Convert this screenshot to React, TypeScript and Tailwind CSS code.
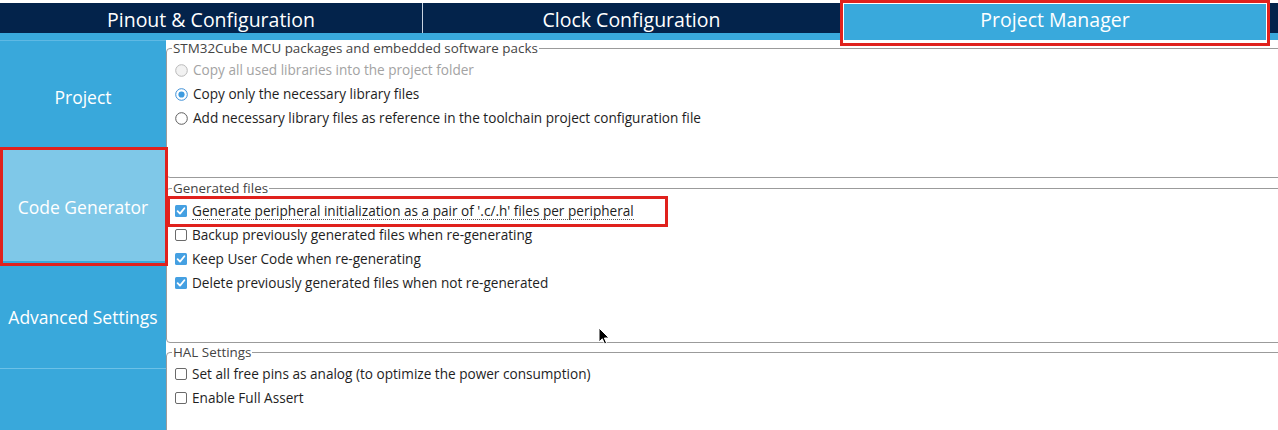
import React from "react";

const FONT = { fontFamily: '"Open Sans", "DejaVu Sans", sans-serif' };

function Radio({ state }: { state: "disabled" | "on" | "off" }) {
  if (state === "disabled")
    return (
      <svg width="13" height="13" viewBox="0 0 13 13" className="shrink-0">
        <circle cx="6.5" cy="6.5" r="5.8" fill="#f2f2f2" stroke="#b9b9b9" strokeWidth="1" />
      </svg>
    );
  if (state === "on")
    return (
      <svg width="13" height="13" viewBox="0 0 13 13" className="shrink-0">
        <circle cx="6.5" cy="6.5" r="5.8" fill="#ffffff" stroke="#3d8fd6" strokeWidth="1" />
        <circle cx="6.5" cy="6.5" r="3.1" fill="#3d9be0" />
      </svg>
    );
  return (
    <svg width="13" height="13" viewBox="0 0 13 13" className="shrink-0">
      <circle cx="6.5" cy="6.5" r="5.8" fill="#ffffff" stroke="#5e5e5e" strokeWidth="1" />
    </svg>
  );
}

function Check({ on }: { on: boolean }) {
  if (on)
    return (
      <svg width="12" height="12" viewBox="0 0 12 12" className="shrink-0">
        <rect x="0" y="0" width="12" height="12" rx="1.5" fill="#45a0e2" />
        <path d="M2.6 6.1 L5 8.6 L9.4 3.2" fill="none" stroke="#ffffff" strokeWidth="1.8" strokeLinecap="round" strokeLinejoin="round" />
      </svg>
    );
  return (
    <svg width="12" height="12" viewBox="0 0 12 12" className="shrink-0">
      <rect x="0.5" y="0.5" width="11" height="11" rx="1.5" fill="#ffffff" stroke="#6a6a6a" strokeWidth="1" />
    </svg>
  );
}

function Row({ children, control, disabled, dotted }: { children: React.ReactNode; control: React.ReactNode; disabled?: boolean; dotted?: boolean }) {
  return (
    <div className="h-[24px] flex items-center pl-[3px] gap-[5px]">
      {control}
      <span
        className={`text-[13.6px] leading-[16px] whitespace-nowrap ${disabled ? "text-[#a3a3a3]" : "text-[#1e1e1e]"} ${dotted ? "border-b border-dotted border-[#555]" : ""}`}
      >
        {children}
      </span>
    </div>
  );
}

function Group({ title, className, children }: { title: string; className: string; children: React.ReactNode }) {
  return (
    <fieldset className={`border border-[#9b9b9b] rounded-[4px] pl-[5px] w-[1125px] min-w-0 shrink-0 ${className}`}>
      <legend className="px-[1px] text-[13.4px] leading-[16px] text-[#444444]">{title}</legend>
      {children}
    </fieldset>
  );
}

export default function App() {
  return (
    <div className="relative w-[1278px] h-[430px] bg-white overflow-hidden" style={FONT}>
      {/* Top tabs */}
      <div className="pt-[3px]">
        <div className="flex h-[30px] bg-[#03234b]">
          <div className="w-[423px] shrink-0 flex items-center justify-center text-white text-[19.5px] pt-[3px] border-r border-[#c9d3e0]">
            Pinout &amp; Configuration
          </div>
          <div className="w-[417px] shrink-0 flex items-center justify-center text-white text-[19.5px] pt-[3px]">Clock Configuration</div>
          <div className="w-[430px] shrink-0 flex items-center justify-center text-white text-[19.5px] pt-[3px] bg-[#39a9dc]">Project Manager</div>
        </div>
        <div className="h-[7px] bg-[#39a9dc]" />
      </div>

      <div className="flex">
        {/* Sidebar */}
        <div className="w-[166px] shrink-0 h-[390px] bg-[#39a8db] flex flex-col border-t border-[#5fb9e4]">
          <div className="h-[108px] flex items-center justify-center text-white text-[17.5px] pt-[4px]">Project</div>
          <div className="h-[1px] bg-[#5fb9e4]" />
          <div className="h-[111px] bg-[#7fc8e8] flex items-center justify-center text-white text-[17.5px] pt-[4px]">Code Generator</div>
          <div className="h-[3px] bg-[#39a8db]" />
          <div className="h-[104px] flex items-center justify-center text-white text-[17.5px] whitespace-nowrap pt-[2px]">Advanced Settings</div>
          <div className="h-[1px] bg-[#6cc1e7]" />
          <div className="flex-1" />
        </div>

        {/* Content */}
        <div className="flex-1 min-w-0 flex flex-col">
          <Group title="STM32Cube MCU packages and embedded software packs" className="h-[138px]">
            <div className="mt-[2px]">
              <Row control={<Radio state="disabled" />} disabled>
                Copy all used libraries into the project folder
              </Row>
              <Row control={<Radio state="on" />}>Copy only the necessary library files</Row>
              <Row control={<Radio state="off" />}>
                Add necessary library files as reference in the toolchain project configuration file
              </Row>
            </div>
          </Group>
          <Group title="Generated files" className="h-[163px] mt-[2px]">
            <div className="mt-[3px]">
              <Row control={<Check on />} dotted>
                Generate peripheral initialization as a pair of '.c/.h' files per peripheral
              </Row>
              <Row control={<Check on={false} />}>Backup previously generated files when re-generating</Row>
              <Row control={<Check on />}>Keep User Code when re-generating</Row>
              <Row control={<Check on />}>Delete previously generated files when not re-generated</Row>
            </div>
          </Group>
          <Group title="HAL Settings" className="h-[120px] mt-[1px]">
            <div className="mt-[2px]">
              <Row control={<Check on={false} />}>Set all free pins as analog (to optimize the power consumption)</Row>
              <Row control={<Check on={false} />}>Enable Full Assert</Row>
            </div>
          </Group>
        </div>
      </div>

      {/* Red highlight annotations */}
      <div className="absolute left-[840px] top-0 w-[430px] h-[46px] border-[3px] border-[#e0211d] shadow-[inset_0_0_0_1px_#ffffff]" />
      <div className="absolute left-0 top-[147px] w-[168px] h-[119px] border-[3px] border-[#e0211d]" />
      <div className="absolute left-[167px] top-[196px] w-[501px] h-[31px] border-[3px] border-[#e0211d]" />

      {/* Mouse cursor */}
      <svg className="absolute left-[598px] top-[327px]" width="12" height="19" viewBox="0 0 12 19">
        <path d="M1 1 L1 15 L4.3 11.8 L6.6 17 L8.6 16.1 L6.4 11 L11 11 Z" fill="#000000" stroke="#ffffff" strokeWidth="1" strokeLinejoin="round" />
      </svg>
    </div>
  );
}
